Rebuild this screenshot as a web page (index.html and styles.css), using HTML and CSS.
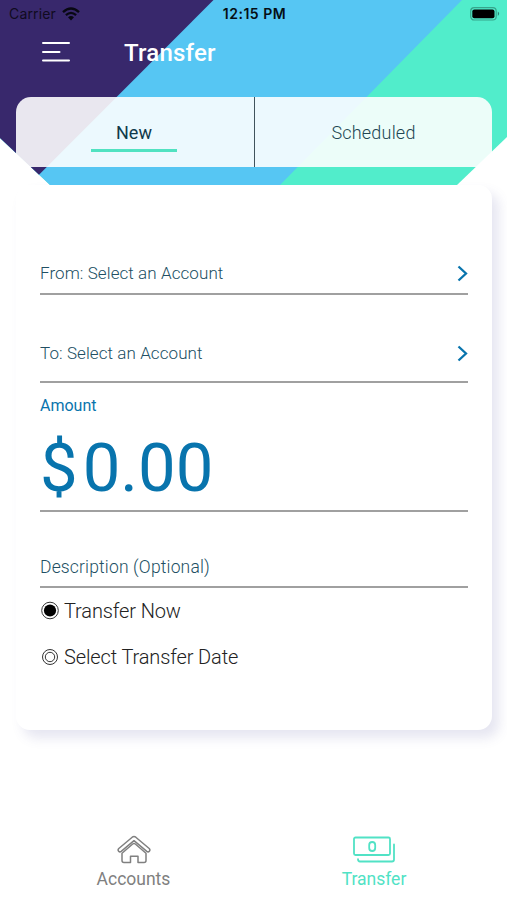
FILE: index.html
```html
<!DOCTYPE html>
<html lang="en">
<head>
<meta charset="utf-8">
<title>Transfer</title>
<link rel="stylesheet" href="styles.css">
</head>
<body>
<div class="screen">
  <header class="header">
    <svg class="backdrop" viewBox="0 0 507 185" aria-hidden="true">
      <path fill="#51edcb" d="M0 0H507V137L457 185H50L0 138Z"/>
      <path fill="#56c6f3" d="M0 0H462L280 185H50L0 138Z"/>
      <path fill="#38286c" d="M0 0H213.500L39 174.700L0 138Z"/>
    </svg>
    <div class="status">
      <div class="carrier"><span>Carrier</span>
        <svg width="18" height="14" viewBox="0 0 18 14"><g fill="none" stroke="#080812" stroke-width="2.300"><path d="M1 5.200Q9-2.200 17 5.200"/><path d="M3.900 8.200Q9 3.600 14.100 8.200"/></g><path fill="#080812" d="M6 10.200Q9 7.800 12 10.200L9 13.400Z"/></svg>
      </div>
      <div class="clock">12:15 PM</div>
      <svg class="battery" width="31" height="14" viewBox="0 0 31 14"><rect x="1.700" y=".7" width="25.500" height="12.300" rx="3.500" fill="none" stroke="#37a58b" stroke-width="1.200"/><rect x="3.300" y="2.500" width="22.200" height="8.800" rx="2" fill="#000"/><path d="M28.800 4.600Q31.500 6.800 28.800 9Z" fill="#2a8573"/></svg>
    </div>
    <div class="titlebar">
      <svg class="menu" width="28" height="20" viewBox="0 0 28 20"><path d="M1 1H27M1 10H17.500M1 18.500H27" fill="none" stroke="#fff" stroke-width="2" stroke-linecap="round"/></svg>
      <h1 class="title">Transfer</h1>
    </div>
    <div class="tabs">
      <div class="tab tab-active"><span>New</span></div>
      <div class="tab"><span>Scheduled</span></div>
    </div>
  </header>
  <main class="card">
    <div class="field from"><span>From: Select an Account</span><svg class="chevron" width="12" height="17" viewBox="0 0 12 17"><path d="M2.500 1.500L10 8.500L2.500 15.500"/></svg></div>
    <div class="field to"><span>To: Select an Account</span><svg class="chevron" width="12" height="17" viewBox="0 0 12 17"><path d="M2.500 1.500L10 8.500L2.500 15.500"/></svg></div>
    <div class="amount">
      <div class="amount-label">Amount</div>
      <div class="amount-value"><span class="currency">$</span><span class="digits">0.00</span></div>
    </div>
    <div class="field description"><span>Description (Optional)</span></div>
    <div class="option now"><svg width="20" height="20" viewBox="0 0 20 20"><circle cx="10" cy="9.500" r="8.300" fill="none" stroke="#333" stroke-width="1"/><circle cx="10" cy="9.500" r="6.100"/></svg><span>Transfer Now</span></div>
    <div class="option later"><svg width="20" height="20" viewBox="0 0 20 20"><g fill="none" stroke="#333" stroke-width="1"><circle cx="10" cy="10" r="7.500"/><circle cx="10" cy="10" r="4.700"/></g></svg><span>Select Transfer Date</span></div>
  </main>
  <nav class="nav">
    <div class="nav-item accounts">
      <svg width="36" height="30" viewBox="0 0 36 30" fill="none" stroke="#808080" stroke-width="1.500" stroke-linejoin="round" stroke-linecap="round"><path d="M16.200 2.200Q18 .8 19.800 2.200L33.200 13.500Q34.500 15 33.400 16.200Q32.200 17.500 30.800 16.400L18 5.700L5.200 16.400Q3.800 17.500 2.600 16.200Q1.500 15 2.800 13.500Z"/><path d="M6 18.200L16.700 9Q18 8 19.300 9L30 18.200V25.500Q30 27.500 28 27.500H22V21.300H14.500V27.500H8Q6 27.500 6 25.500Z"/></svg>
      <span>Accounts</span>
    </div>
    <div class="nav-item transfer">
      <svg width="44" height="30" viewBox="0 0 44 30" fill="none" stroke="#51e2c5" stroke-width="1.800" stroke-linecap="round"><rect x="2" y="2.500" width="36" height="17.500" rx="1.500"/><rect x="17.200" y="7" width="6" height="9" rx="3"/><path d="M42 9.500V24.500Q42 26.500 40 26.500H8Q6 26.500 6 24.200"/></svg>
      <span>Transfer</span>
    </div>
  </nav>
</div>
</body>
</html>
```
FILE: styles.css
```css
* { box-sizing: border-box; }

body {
  margin: 0;
  background: #fff;
  font-family: Roboto, "Liberation Sans", sans-serif;
}

.screen {
  width: 507px;
  height: 900px;
  display: flex;
  flex-direction: column;
  overflow: hidden;
}

.header {
  position: relative;
  height: 185px;
  flex: none;
  z-index: 1;
}

.backdrop {
  position: absolute;
  inset: 0;
  width: 507px;
  height: 185px;
  z-index: -1;
}

.status {
  display: grid;
  grid-template-columns: 1fr auto 1fr;
  align-items: center;
  height: 27px;
  padding: 0 7px 0 9px;
  font: 500 14px/27px Inter, sans-serif;
  color: #050f16;
}

.carrier {
  display: flex;
  align-items: center;
  gap: 6px;
  font-weight: 400;
  letter-spacing: .15px;
  color: #100b20;
}

.clock {
  font-weight: 600;
  letter-spacing: .5px;
}

.battery { justify-self: end; }

.titlebar {
  display: flex;
  align-items: center;
  height: 50px;
  padding-left: 42px;
}

.title {
  margin: 2px 0 0 54px;
  font-size: 24px;
  font-weight: 500;
  letter-spacing: .2px;
  line-height: 30px;
  color: #fff;
}

.tabs {
  display: grid;
  grid-template-columns: 239px 1fr;
  grid-template-rows: 70px;
  height: 70px;
  margin: 20px 15px 0 16px;
  border-radius: 15px 15px 0 0;
  background: rgba(255, 255, 255, .89);
}

.tab {
  display: flex;
  justify-content: center;
  font-size: 18px;
  font-weight: 300;
  letter-spacing: .2px;
  line-height: 72px;
  color: #214653;
}

.tab-active {
  padding-right: 2px;
  border-right: 1px solid #40535d;
  font-weight: 400;
  letter-spacing: 0;
  color: #103a4b;
}

.tab-active span {
  width: 86px;
  height: 55px;
  border-bottom: 3px solid #51e2c1;
  text-align: center;
}

.card {
  width: 476px;
  height: 545px;
  flex: none;
  margin-left: 16px;
  padding: 65px 24px 0;
  border-radius: 14px;
  background: #fff;
  box-shadow: 7px 8px 12px rgba(90, 90, 160, .15);
}

.field {
  display: flex;
  align-items: center;
  justify-content: space-between;
  border-bottom: 2px solid #a0a0a0;
  font-size: 17px;
  font-weight: 300;
  letter-spacing: .08px;
  color: #214f63;
}

.chevron {
  fill: none;
  stroke: #0874ad;
  stroke-width: 2.300;
}

.from { height: 45px; padding-top: 3px; }
.to { height: 88px; padding-top: 30px; }

.amount {
  height: 129px;
  padding-top: 13px;
  border-bottom: 2px solid #a0a0a0;
  color: #0874ad;
}

.amount-label {
  font-size: 16px;
  line-height: 20px;
}

.amount-value {
  display: flex;
  font-size: 67px;
  line-height: 80px;
  margin-top: 12px;
}

.digits { margin-left: 5px; }

.description {
  height: 76px;
  padding-top: 36px;
  font-size: 17.500px;
  letter-spacing: .16px;
}

.option {
  display: flex;
  align-items: center;
  gap: 4px;
  height: 46px;
  font-size: 20px;
  font-weight: 300;
  letter-spacing: -.12px;
  color: #222;
}

.nav {
  display: flex;
  margin-top: 105px;
}

.nav-item {
  display: flex;
  flex-direction: column;
  align-items: center;
  font-size: 17.500px;
  line-height: 28px;
}

.accounts { width: 267px; color: #808080; }
.transfer { width: 214px; color: #51e2c5; }
```
